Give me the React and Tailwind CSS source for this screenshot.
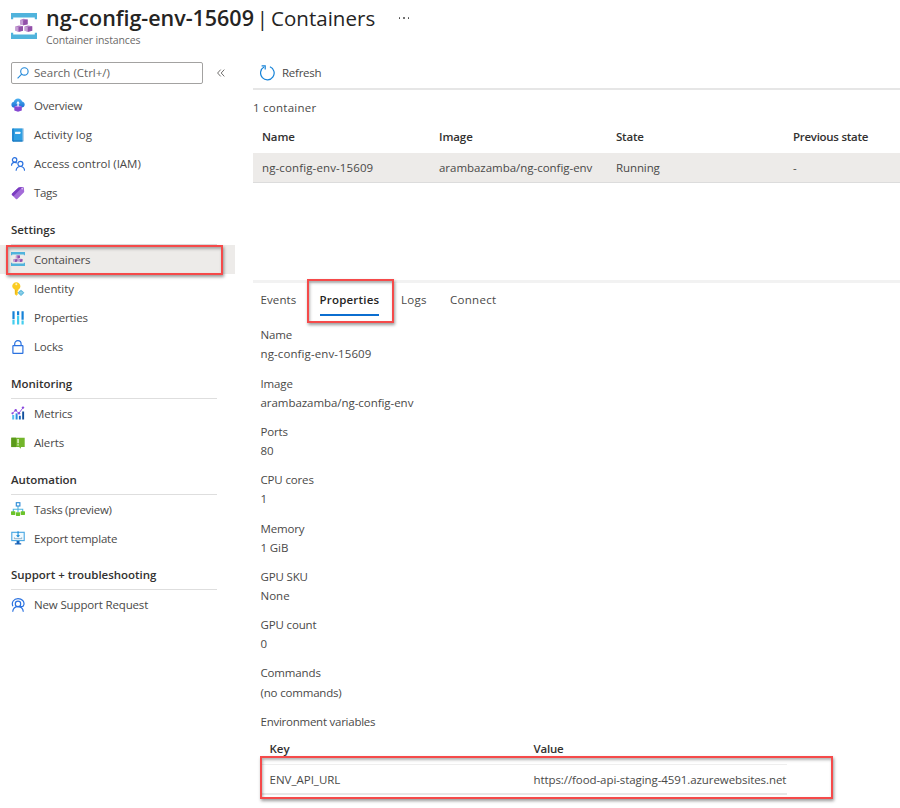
import React from "react";

function ContainerIcon({ size }) {
  return (
    <svg width={size} height={size} viewBox="0 0 26 26">
      <path d="M0 0h26v6.2h-2.2V4.6H2.2v1.6H0z" fill="#50b3dc" />
      <path d="M0 26h26v-6.2h-2.2v1.6H2.2v-1.6H0z" fill="#50b3dc" />
      {[[9, 5.8], [4.4, 12.4], [13.6, 12.4]].map(([x, y]) => (
        <g key={x} transform={`translate(${x} ${y})`}>
          <path d="M0 1.2 3.6 0l4 .8v4.600L3.600 6.400 0 5.400z" fill="#b27cc4" />
          <path d="M0 1.200 3.200 1.800V6.400L0 5.400z" fill="#c5a0d4" />
          <path d="M3.200 1.800 7.600.8v4.600L3.200 6.400z" fill="#9250a8" />
        </g>
      ))}
    </svg>
  );
}

function OverviewIcon() {
  return (
    <svg width="14" height="14" viewBox="0 0 14 14">
      <defs>
        <linearGradient id="cloud" x1="0" y1="0" x2="0" y2="1">
          <stop offset="0" stopColor="#4fb3f2" />
          <stop offset="1" stopColor="#1a6fd4" />
        </linearGradient>
      </defs>
      <path d="M3.2 9.6A3 3 0 0 1 .4 6.7c0-1.5 1-2.6 2.4-2.9C3.2 1.7 4.9.4 7 .4c2.1 0 3.7 1.3 4.2 3.2 1.5.3 2.5 1.5 2.5 3 0 1.7-1.3 3-3 3z" fill="url(#cloud)" />
      <path d="M3.3 8.200 7 7.500l3.800.7v4.300L7 13.700l-3.700-1.200z" fill="#8548d2" />
      <path d="M3.3 8.200 7 7.500l3.800.7L7 9.200z" fill="#b58af0" />
      <path d="M6.400 8.300V5.600H5.200L7 3l1.900 2.600H7.700v2.700z" fill="#fff" />
    </svg>
  );
}

function ActivityIcon() {
  return (
    <svg width="14" height="14" viewBox="0 0 14 14">
      <path d="M2.500.4h10.300v13H2.500z" fill="#a8c8e4" />
      <path d="M1.600.4h9.900v13H2.200a1 1 0 0 1-1-1V.9z" fill="#2f9fe2" />
      <path d="M1.200.9c0-.3.200-.5.500-.5h1v13h-.5a1 1 0 0 1-1-1z" fill="#1a80cc" />
      <rect x="4" y="3.800" width="5.400" height="2.200" rx=".4" fill="#eef8ff" />
      <path d="M1.500 12.400h10v1H2.200z" fill="#1a70b8" />
    </svg>
  );
}

function PeopleIcon() {
  return (
    <svg width="14" height="14" viewBox="0 0 14 14" fill="none" stroke="#2b72e0" strokeWidth="1.200">
      <circle cx="3.600" cy="2.900" r="2.200" />
      <path d="M.5 8.700C.6 6.500 1.800 5.300 3.600 5.300c1 0 1.800.3 2.300.9" />
      <circle cx="9.400" cy="6.800" r="2.500" />
      <path d="M5.100 13.800c.2-2.700 1.900-4.300 4.300-4.300s4 1.600 4.200 4.300" />
    </svg>
  );
}

function TagIcon() {
  return (
    <svg width="14" height="14" viewBox="0 0 14 14">
      <path d="M7.600 1.400 11.800.9c.6 0 1 .3 1.100.8l.3 3.900c0 .4-.1.700-.4 1L6.300 13c-.4.400-1 .4-1.400 0L1 9c-.4-.4-.4-1 0-1.400z" fill="#a36bd8" />
      <path d="M7.600 1.400 3.200 5.600 1 7.700C.6 8.100.6 8.600 1 9l1.400 1.300L10 2.600l1-1.600z" fill="#7a3cc0" />
      <circle cx="11.200" cy="2.800" r=".8" fill="#e8d2fa" />
    </svg>
  );
}

function KeyIcon() {
  return (
    <svg width="14" height="14" viewBox="0 0 14 14">
      <path d="M5.300.2c2.300 0 4.100 1.700 4.100 4 0 1.500-.8 2.800-2.100 3.500v.8l-.9.9.9.9-.9 1 .7.800-1.700 1.700-1.600-1.500V7.700A4 4 0 0 1 1.200 4.200c0-2.300 1.800-4 4.100-4z" fill="#fbcc22" />
      <circle cx="5.300" cy="2.300" r="1" fill="#fff4c0" />
      <path d="M4.700 7.900v4" stroke="#e5a512" strokeWidth=".7" />
      <path d="m10 7.700 3.400 3.100L10 14l-3.400-3.200z" fill="#52b3d9" />
      <path d="M10 8.500v4.600M7.600 10.800h4.800" stroke="#bce5f3" strokeWidth=".6" />
    </svg>
  );
}

function PropertiesIcon() {
  return (
    <svg width="14" height="14" viewBox="0 0 14 14">
      <path d="M1.400.3h2.200v8H1.400zM6 .3h2.200v3.900H6zM10.500.3h2.200v8.500h-2.200z" fill="#1682d8" />
      <path d="M1.400 8.900h2.200v4.700H1.400zM6 4.700h2.200v8.900H6zM10.500 9.400h2.200v4.200h-2.200z" fill="#43cdee" />
    </svg>
  );
}

function LockIcon() {
  return (
    <svg width="14" height="14" viewBox="0 0 14 14" fill="none" stroke="#2b72e0" strokeWidth="1.200">
      <rect x="1.900" y="5.700" width="10" height="7.700" rx=".4" />
      <path d="M3.700 5.700V3.900C3.700 2 5 .7 6.900.7s3.200 1.300 3.200 3.200v1.800" />
    </svg>
  );
}

function MetricsIcon() {
  return (
    <svg width="14" height="14" viewBox="0 0 14 14">
      <path d="M1.200 9h2v4.500h-2z" fill="#53bdf0" />
      <path d="M4.600 7.400h2v6.100h-2z" fill="#2b8de0" />
      <path d="M7.900 9.800h1.900v3.700H7.900z" fill="#1868bd" />
      <path d="M11.200 5.500h1.900v8h-1.900z" fill="#124f9c" />
      <path d="m1.400 7.300 3.200-3 3.200 3 4.400-5.800" stroke="#9b62e4" strokeWidth="1" fill="none" />
      <g fill="#8b4ade">
        <circle cx="1.500" cy="7.300" r="1.100" />
        <circle cx="4.700" cy="4.300" r="1.200" />
        <circle cx="8" cy="7.200" r="1.200" />
        <circle cx="12" cy="1.600" r="1.200" />
      </g>
    </svg>
  );
}

function AlertsIcon() {
  return (
    <svg width="14" height="14" viewBox="0 0 14 14">
      <path d="M.3 1.700h13.400v9.400H9.900v1.700L8 11.100H.3z" fill="#72b52a" />
      <path d="M.3 1.700H5v9.400H.3z" fill="#5c9a1c" />
      <path d="M6.400 3.100h1.300v4.200H6.400zM6.400 8.200h1.300v1.300H6.400z" fill="#f4ffe6" />
    </svg>
  );
}

function TasksIcon() {
  return (
    <svg width="14" height="14" viewBox="0 0 14 14">
      <path d="M7 4v6M2.300 10V7.300h9.400V10" stroke="#4fb4dd" strokeWidth="1.100" fill="none" />
      <rect x="5.300" y=".7" width="3.600" height="3.300" fill="#fff" stroke="#2a8bd8" strokeWidth="1.100" />
      <g fill="#6cc32c">
        <rect x="0" y="9.200" width="4.300" height="3.700" rx=".6" />
        <rect x="4.900" y="10.200" width="4.200" height="3.700" rx=".6" />
        <rect x="9.700" y="9.200" width="4.300" height="3.700" rx=".6" />
      </g>
    </svg>
  );
}

function ExportIcon() {
  return (
    <svg width="14" height="14" viewBox="0 0 14 14">
      <rect x=".8" y="1.300" width="12.400" height="8.300" fill="#f1faff" stroke="#45a5e2" strokeWidth="1.100" />
      <path d="M5.600 9.900h2.900v2.400h1.700v1.200H3.900v-1.200h1.700z" fill="#1762b8" />
      <path d="M6.500.2h1.100v4h1.500L7.050 6.500 5 4.200h1.500z" fill="#168ad8" />
      <path d="M3.400 6.400v1.300h7.300V6.400" fill="none" stroke="#7a9db8" strokeWidth=".8" />
    </svg>
  );
}

function SupportIcon() {
  return (
    <svg width="14" height="14" viewBox="0 0 14 14" fill="none" stroke="#2b72e0" strokeWidth="1.200">
      <circle cx="7" cy="5.900" r="2.700" />
      <path d="M1.700 13.800c.3-3.300 2.300-5.200 5.300-5.200s5 1.900 5.300 5.200" />
      <path d="M1.900 8.200C.1 4.400 2.800.7 7 .7c4.200 0 6.500 2.900 5.900 5.900-.2 1.200-1.200 2-2.500 2H7.600" />
    </svg>
  );
}

function SidebarItem({ icon, label, active, tracking = "" }) {
  return (
    <li className={`flex h-[29.2px] items-center gap-[9px] pl-[11px] ${active ? "bg-[#edebe9]" : ""}`}>
      <span className="flex w-[14px] shrink-0">{icon}</span>
      <span className={tracking}>{label}</span>
    </li>
  );
}

function SidebarSection({ title, children }) {
  return (
    <section>
      <h2 className="mr-[18px] ml-[11px] flex h-[37.300px] items-start border-b border-[#dedede] pt-[14.300px] leading-4 font-semibold tracking-[-0.04px] text-[#323130]">
        {title}
      </h2>
      <ul>{children}</ul>
    </section>
  );
}

const properties = [
  ["Name", "ng-config-env-15609", "tracking-[0.1px]"],
  ["Image", "arambazamba/ng-config-env", "tracking-[-0.05px]"],
  ["Ports", "80", ""],
  ["CPU cores", "1", ""],
  ["Memory", "1 GiB", "tracking-[-0.1px]"],
  ["GPU SKU", "None", ""],
  ["GPU count", "0", ""],
  ["Commands", "(no commands)", "tracking-[-0.18px]"],
];

const highlight =
  "pointer-events-none absolute border-2 border-[#f54a4a] shadow-[1px_2px_3px_rgba(0,0,0,0.4),inset_1px_2px_3px_rgba(0,0,0,0.3)]";

export default function App() {
  return (
    <div className="relative flex h-[808px] w-[900px] flex-col overflow-hidden bg-white font-['Open_Sans','Noto_Sans',sans-serif] text-[11.5px] text-[#4a4948]">
      <header className="flex h-[57px] shrink-0 pt-[6px] pl-[11px]">
        <div className="mt-[7px] mr-[9px]">
          <ContainerIcon size={26} />
        </div>
        <div>
          <div className="flex h-6 items-center text-[#252423]">
            <h1 className="w-[208px] text-[21.5px] font-semibold tracking-[-0.03px] whitespace-nowrap">ng-config-env-15609</h1>
            <span className="w-[17px] text-center text-[20.5px]">|</span>
            <span className="w-[104px] text-[20.5px] tracking-[0.03px]">Containers</span>
            <span className="ml-[23.500px] flex gap-[3px]">
              <i className="size-[1.500px] rounded-full bg-[#444]" />
              <i className="size-[1.500px] rounded-full bg-[#444]" />
              <i className="size-[1.500px] rounded-full bg-[#444]" />
            </span>
          </div>
          <p className="mt-[2px] text-[10.5px] leading-4 tracking-[-0.14px] text-[#6b6a69]">Container instances</p>
        </div>
      </header>

      <div className="flex min-h-0 flex-1">
        <aside className="w-[235px] shrink-0">
          <div className="flex h-[33.800px] pt-[5px] pl-[11px]">
            <div className="flex h-[22px] w-[192px] items-center gap-[5px] rounded-[2px] border border-[#a3a2a1] pl-[5px] text-[#646362]">
              <svg width="12" height="12" viewBox="0 0 12 12" fill="none" stroke="#2188d9" strokeWidth="1.100">
                <circle cx="7.400" cy="4.400" r="3.700" />
                <path d="M4.700 7.200.6 11.400" />
              </svg>
              <span>Search (Ctrl+/)</span>
            </div>
            <svg className="mt-[7px] ml-[13.500px]" width="8" height="8" viewBox="0 0 8 8" fill="none" stroke="#605e5c" strokeWidth=".9">
              <path d="M3.700.6.600 4l3.100 3.400M7.300.6 4.200 4l3.100 3.400" />
            </svg>
          </div>
          <ul>
            <SidebarItem icon={<OverviewIcon />} label="Overview" tracking="tracking-[-0.2px]" />
            <SidebarItem icon={<ActivityIcon />} label="Activity log" tracking="tracking-[0.05px]" />
            <SidebarItem icon={<PeopleIcon />} label="Access control (IAM)" tracking="tracking-[-0.03px]" />
            <SidebarItem icon={<TagIcon />} label="Tags" tracking="tracking-[-0.3px]" />
          </ul>
          <SidebarSection title="Settings">
            <SidebarItem icon={<ContainerIcon size={14} />} label="Containers" active tracking="tracking-[-0.2px]" />
            <SidebarItem icon={<KeyIcon />} label="Identity" tracking="tracking-[-0.1px]" />
            <SidebarItem icon={<PropertiesIcon />} label="Properties" tracking="tracking-[-0.2px]" />
            <SidebarItem icon={<LockIcon />} label="Locks" tracking="tracking-[-0.15px]" />
          </SidebarSection>
          <SidebarSection title="Monitoring">
            <SidebarItem icon={<MetricsIcon />} label="Metrics" tracking="tracking-[-0.15px]" />
            <SidebarItem icon={<AlertsIcon />} label="Alerts" tracking="tracking-[-0.15px]" />
          </SidebarSection>
          <SidebarSection title="Automation">
            <SidebarItem icon={<TasksIcon />} label="Tasks (preview)" tracking="tracking-[-0.27px]" />
            <SidebarItem icon={<ExportIcon />} label="Export template" tracking="tracking-[-0.2px]" />
          </SidebarSection>
          <SidebarSection title="Support + troubleshooting">
            <SidebarItem icon={<SupportIcon />} label="New Support Request" tracking="tracking-[-0.14px]" />
          </SidebarSection>
        </aside>

        <main className="ml-[18px] flex min-w-0 flex-1 flex-col">
          <div className="flex h-[33px] shrink-0 items-center gap-[7px] border-b-2 border-[#e6e6e6] pl-[7px]">
            <svg width="15" height="16" viewBox="0 0 15 16" fill="none" stroke="#1683d8" strokeWidth="1.200">
              <path d="M9.900 1.700a6.800 6.800 0 1 1-5.900.4" />
              <path d="M1.600.9h3.600v3.500" />
            </svg>
            <span className="tracking-[-0.25px]">Refresh</span>
          </div>
          <p className="mt-[10px] leading-4 tracking-[0.25px]">1 container</p>

          <div className="mt-[6px]">
            <div className="grid h-[31px] grid-cols-[177px_177px_177px_1fr] items-center pb-[2px] pl-[9px] font-semibold text-[#323130]">
              <span className="tracking-[-0.15px]">Name</span>
              <span className="tracking-[-0.1px]">Image</span>
              <span className="tracking-[-0.2px]">State</span>
              <span className="tracking-[-0.28px]">Previous state</span>
            </div>
            <div className="grid h-[30px] grid-cols-[177px_177px_177px_1fr] items-center border-b border-[#dcdcdc] bg-[#edebe9] pl-[9px]">
              <span className="tracking-[0.12px]">ng-config-env-15609</span>
              <span className="tracking-[-0.03px]">arambazamba/ng-config-env</span>
              <span className="tracking-[-0.1px]">Running</span>
              <span>-</span>
            </div>
          </div>

          <div className="mt-[97px] h-[3px] shrink-0 bg-[#f2f2f2]" />

          <nav className="flex h-[33px] shrink-0 pl-[7.500px] leading-4">
            <span className="w-[59px] pt-[9px] tracking-[0.12px]">Events</span>
            <span className="mr-[22px] w-[59.500px] border-b-2 border-[#0b6ed0] pt-[9px] font-semibold tracking-[0.2px] text-[#252423]">Properties</span>
            <span className="w-[49px] pt-[9px] tracking-[0.25px]">Logs</span>
            <span className="pt-[9px] tracking-[0.3px]">Connect</span>
          </nav>

          <dl className="mt-[11.200px] pl-[7.500px]">
            {properties.map(([name, value, tracking]) => (
              <div key={name} className="h-[48.330px]">
                <dt className="h-[19.100px] leading-4 tracking-[-0.15px]">{name}</dt>
                <dd className={`leading-4 ${tracking}`}>{value}</dd>
              </div>
            ))}
            <dt className="leading-4 tracking-[-0.25px]">Environment variables</dt>
          </dl>

          <div className="mt-[8.800px] ml-[9px] w-[525px]">
            <div className="grid h-[26px] grid-cols-[264px_1fr] border-b border-[#eeeeee] pl-[7.500px] leading-5 font-semibold text-[#323130]">
              <span>Key</span>
              <span className="tracking-[-0.2px]">Value</span>
            </div>
            <div className="grid h-[30.500px] grid-cols-[264px_1fr] items-center border-b-2 border-[#e8e8e8] pt-px pl-[7.500px]">
              <span>ENV_API_URL</span>
              <span className="tracking-[-0.08px]">https://food-api-staging-4591.azurewebsites.net</span>
            </div>
          </div>
        </main>
      </div>

      <div className={`${highlight} top-[245px] left-[6px] h-[30px] w-[217px]`} />
      <div className={`${highlight} top-[279px] left-[307px] h-[44px] w-[87px]`} />
      <div className={`${highlight} top-[756px] left-[260px] h-[43px] w-[573px]`} />
    </div>
  );
}
